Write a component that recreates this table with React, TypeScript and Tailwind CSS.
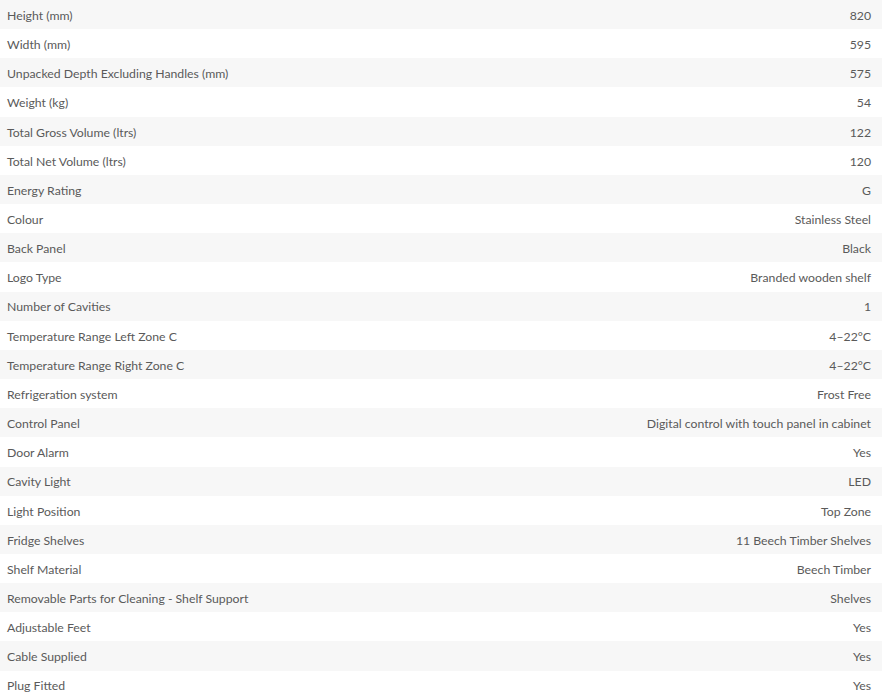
import React from "react";

const specs: [string, string][] = [
  ["Height (mm)", "820"],
  ["Width (mm)", "595"],
  ["Unpacked Depth Excluding Handles (mm)", "575"],
  ["Weight (kg)", "54"],
  ["Total Gross Volume (ltrs)", "122"],
  ["Total Net Volume (ltrs)", "120"],
  ["Energy Rating", "G"],
  ["Colour", "Stainless Steel"],
  ["Back Panel", "Black"],
  ["Logo Type", "Branded wooden shelf"],
  ["Number of Cavities", "1"],
  ["Temperature Range Left Zone C", "4–22°C"],
  ["Temperature Range Right Zone C", "4–22°C"],
  ["Refrigeration system", "Frost Free"],
  ["Control Panel", "Digital control with touch panel in cabinet"],
  ["Door Alarm", "Yes"],
  ["Cavity Light", "LED"],
  ["Light Position", "Top Zone"],
  ["Fridge Shelves", "11 Beech Timber Shelves"],
  ["Shelf Material", "Beech Timber"],
  ["Removable Parts for Cleaning - Shelf Support", "Shelves"],
  ["Adjustable Feet", "Yes"],
  ["Cable Supplied", "Yes"],
  ["Plug Fitted", "Yes"],
];

function App() {
  return (
    <div className="w-[882px] bg-white font-['Lato','Open_Sans',sans-serif] text-[12.25px] text-[#5a5a5a]">
      <table className="w-full border-collapse">
        <tbody>
          {specs.map(([label, value], i) => (
            <tr key={label} className={i % 2 === 0 ? "bg-[#f7f7f7]" : "bg-white"}>
              <td className="h-[29.17px] pl-[7px] pt-[3px] pb-0 text-left align-middle">{label}</td>
              <td className="h-[29.17px] pr-[11px] pt-[3px] pb-0 text-right align-middle">{value}</td>
            </tr>
          ))}
        </tbody>
      </table>
    </div>
  );
}

export default App;
